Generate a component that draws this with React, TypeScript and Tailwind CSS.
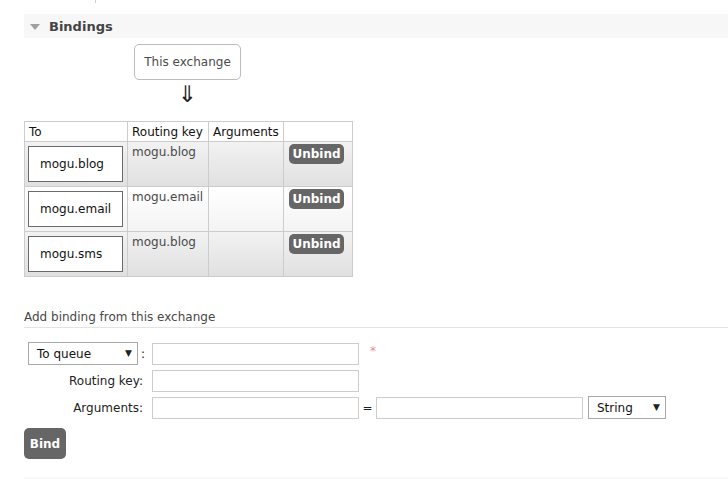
import React from "react";

const font = { fontFamily: '"DejaVu Sans", Verdana, sans-serif' };

function Select({ label, w }: { label: string; w: string }) {
  return (
    <div className={`flex items-center justify-between h-[23px] border border-[#a8a8a8] bg-white pl-[8px] pr-[5px] text-[12px] text-[#111] ${w}`}>
      <span>{label}</span>
      <span className="text-[9px] text-[#222]">▼</span>
    </div>
  );
}

function Input({ w }: { w: string }) {
  return <div className={`h-[22px] border border-[#cccccc] bg-white ${w}`} />;
}

const rows = [
  { to: "mogu.blog", key: "mogu.blog", alt: true },
  { to: "mogu.email", key: "mogu.email", alt: false },
  { to: "mogu.sms", key: "mogu.blog", alt: true },
];

export default function App() {
  return (
    <div className="w-[728px] h-[479px] overflow-hidden bg-white text-[12px] text-[#484848]" style={font}>
      <div className="ml-[95px] w-px h-[3px] bg-[#cfcfcf]" />
      <div className="ml-[24px] mt-[11px] h-[24px] bg-[#f7f7f7] flex items-center pt-[1px]">
        <svg width="10" height="6" viewBox="0 0 10 6" className="ml-[6px]">
          <path d="M0 0 L10 0 L5 6 Z" fill="#a0a0a0" />
        </svg>
        <span className="ml-[9px] font-bold text-[13px] text-[#444]">Bindings</span>
      </div>
      <div className="ml-[134px] mt-[6px] w-[107px] h-[36px] border border-[#bcbcbc] rounded-[5px] flex items-center justify-center text-[12px] text-[#4a4a4a]">
        This exchange
      </div>
      <div className="ml-[134px] w-[107px] h-[41px] flex justify-center pt-[2px] text-[23px] leading-[24px] text-[#222]">
        ⇓
      </div>
      <table className="ml-[24px] border-collapse text-[12px]">
        <thead>
          <tr className="h-[20px] bg-white text-[#111]">
            <th className="w-[103px] border border-[#cccccc] px-[4px] text-left font-normal">To</th>
            <th className="w-[81px] border border-[#cccccc] px-[4px] text-left font-normal">Routing key</th>
            <th className="w-[75px] border border-[#cccccc] px-[4px] text-left font-normal">Arguments</th>
            <th className="w-[69px] border border-[#cccccc]"></th>
          </tr>
        </thead>
        <tbody>
          {rows.map((r, i) => (
            <tr
              key={i}
              className={
                r.alt
                  ? "h-[45px] bg-gradient-to-b from-[#f2f2f2] to-[#e0e0e0]"
                  : "h-[45px] bg-gradient-to-b from-[#ffffff] to-[#f3f3f3]"
              }
            >
              <td className="border border-[#cccccc] px-[3px] align-middle">
                <div className="w-[95px] h-[36px] border border-[#6a6a6a] bg-white flex items-center pl-[11px] pb-[1px] text-[#111]">
                  {r.to}
                </div>
              </td>
              <td className="border border-[#cccccc] px-[4px] pt-[1px] align-top text-[#4a4a4a]">{r.key}</td>
              <td className="border border-[#cccccc]"></td>
              <td className="border border-[#cccccc] pl-[5px] pt-[2px] align-top">
                <div className="w-[55px] h-[20px] rounded-[5px] bg-[#666666] text-white font-bold text-[12px] flex items-center justify-center">
                  Unbind
                </div>
              </td>
            </tr>
          ))}
        </tbody>
      </table>
      <div className="ml-[24px] mt-[33px] h-[18px] border-b border-[#e3e3e3] text-[12px] text-[#484848] leading-[14px]">
        Add binding from this exchange
      </div>
      <div className="ml-[28px] mt-[14px] flex flex-col gap-[4px] text-[12px] text-[#222]">
        <div className="flex items-center h-[23px]">
          <Select label="To queue" w="w-[110px]" />
          <span className="ml-[3px] w-[11px]">:</span>
          <Input w="w-[207px]" />
          <span className="ml-[11px] text-[#f28b8b] text-[12px] -mt-[6px]">*</span>
        </div>
        <div className="flex items-center h-[23px]">
          <span className="w-[115px] mr-[9px] text-right">Routing key:</span>
          <Input w="w-[207px]" />
        </div>
        <div className="flex items-center h-[23px]">
          <span className="w-[115px] mr-[9px] text-right">Arguments:</span>
          <Input w="w-[207px]" />
          <span className="w-[17px] text-center">=</span>
          <Input w="w-[207px]" />
          <div className="ml-[5px]">
            <Select label="String" w="w-[78px]" />
          </div>
        </div>
      </div>
      <div className="ml-[24px] mt-[9px] w-[42px] h-[31px] rounded-[5px] bg-[#666666] text-white font-bold text-[12px] flex items-center justify-center">
        Bind
      </div>
      <div className="ml-[24px] mt-[18px] h-[4px] bg-[#f7f7f7]" />
    </div>
  );
}
